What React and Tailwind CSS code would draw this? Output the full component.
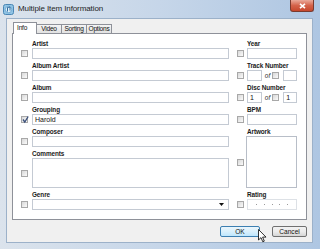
import React from 'react';

const Check = ({ checked }) => (
  <div className="relative w-[7px] h-[7px] shrink-0 border border-[#a8a8a8] bg-linear-to-br from-[#d8d8d8] to-[#fbfbfb]">
    {checked && (
      <svg className="absolute -left-[1px] -top-[2px]" width="9" height="9" viewBox="0 0 9 9">
        <path d="M2 4.5 L3.8 7 L7.2 1.5" fill="none" stroke="#3a4f7a" strokeWidth="1.3" />
      </svg>
    )}
  </div>
);

const Label = ({ children, className = '' }) => (
  <div className={`h-[8px] text-[6.4px] font-bold leading-[8px] tracking-[-0.1px] text-[#1a1a1a] ${className}`}>
    {children}
  </div>
);

const Box = ({ children, className = '' }) => (
  <div className={`h-[11px] border border-[#c4cad3] bg-white text-[7px] leading-[9px] pl-[2px] ${className}`}>
    {children}
  </div>
);

const LeftField = ({ label, checked, value, focused }) => (
  <div className="flex flex-col">
    <Label className="pl-[11px]">{label}</Label>
    <div className="flex items-center gap-[4px]">
      <Check checked={checked} />
      <Box className={`flex-1 ${focused ? 'border-[#9fc2e6]' : ''}`}>{value}</Box>
    </div>
  </div>
);

const RightField = ({ label }) => (
  <div className="flex flex-col">
    <Label className="pl-[10px]">{label}</Label>
    <div className="flex items-center gap-[3px]">
      <Check />
      <Box className="flex-1" />
    </div>
  </div>
);

const NumberField = ({ label, a, b }) => (
  <div className="flex flex-col">
    <Label className="pl-[10px]">{label}</Label>
    <div className="flex items-center">
      <Check />
      <Box className="ml-[3px] w-[15px] pl-[2px]">{a}</Box>
      <span className="ml-[3px] text-[6.5px] italic text-[#333] leading-[8px]">of</span>
      <div className="ml-[2px]">
        <Check />
      </div>
      <Box className="ml-[4px] w-[14px] pl-[2px]">{b}</Box>
    </div>
  </div>
);

const Tab = ({ children, active }) =>
  active ? (
    <div className="relative z-10 h-[12px] w-[24px] border border-b-0 border-[#8e9199] bg-white pl-[3px] text-[6.6px] leading-[10px] tracking-[-0.2px]">
      {children}
    </div>
  ) : (
    <div className="-ml-[1px] h-[10px] w-[26px] border border-[#8e9199] bg-linear-to-b from-[#f4f4f4] to-[#e2e2e2] text-center text-[6.6px] leading-[8px] tracking-[-0.25px]">
      {children}
    </div>
  );

export default function App() {
  return (
    <div
      className="relative w-[320px] h-[249px] overflow-hidden bg-linear-to-r from-[#dbe3ec] via-[#c6d6e9] to-[#aec6e2] text-[#111]"
      style={{ fontFamily: '"Liberation Sans", Arial, sans-serif' }}
    >
      {/* title bar */}
      <div className="flex h-[18px] items-center pl-[3px]">
        <svg width="11" height="11" viewBox="0 0 11 11">
          <rect x="0.5" y="0.5" width="10" height="10" rx="2" fill="#8fc3e4" stroke="#4a86b5" />
          <circle cx="5.5" cy="5.5" r="3.2" fill="#dff1fb" stroke="#5b9ccc" strokeWidth="0.8" />
          <path d="M4.5 7.5 V3.5 L7 3 V6.6" fill="none" stroke="#1f5f95" strokeWidth="0.9" />
        </svg>
        <span className="ml-[4px] text-[8px] leading-[10px] tracking-[-0.1px] text-[#1e1e1e]">Multiple Item Information</span>
        <div className="ml-auto mr-[6px] flex h-[12px] w-[24px] self-start items-center justify-center rounded-b-[3px] border border-t-0 border-[#7a3a2e] bg-linear-to-b from-[#e9a99a] via-[#d4624a] to-[#c6472c]">
          <svg width="7" height="6" viewBox="0 0 7 6">
            <path d="M1 0.8 L6 5.2 M6 0.8 L1 5.2" stroke="#fff" strokeWidth="1.6" />
          </svg>
        </div>
      </div>

      {/* client area */}
      <div className="ml-[6px] flex h-[225px] w-[307px] flex-col border border-[#9cb1c9] bg-[#f0f0f0] px-[5px] pt-[3px]">
        <div className="flex h-[12px] items-end pl-[1px]">
          <Tab active>Info</Tab>
          <Tab>Video</Tab>
          <Tab>Sorting</Tab>
          <Tab>Options</Tab>
        </div>
        <div className="-mt-[1px] flex h-[187px] w-[295px] gap-[8px] border border-[#8e9199] bg-white pl-[8px] pt-[6px]">
          <div className="flex w-[208px] flex-col gap-[3px]">
            <LeftField label="Artist" />
            <LeftField label="Album Artist" />
            <LeftField label="Album" />
            <LeftField label="Grouping" checked value="Harold" focused />
            <LeftField label="Composer" />
            <div className="flex flex-col">
              <Label className="pl-[11px]">Comments</Label>
              <div className="flex items-center gap-[4px]">
                <Check />
                <div className="h-[30px] flex-1 border border-[#c4cad3] bg-white" />
              </div>
            </div>
            <div className="flex flex-col">
              <Label className="pl-[11px]">Genre</Label>
              <div className="flex items-center gap-[4px]">
                <Check />
                <div className="flex h-[11px] flex-1 items-center justify-end border border-[#c4cad3] bg-white pr-[4px]">
                  <svg width="5" height="3" viewBox="0 0 5 3">
                    <path d="M0 0 H5 L2.5 3 Z" fill="#111" />
                  </svg>
                </div>
              </div>
            </div>
          </div>

          <div className="flex w-[60px] flex-col gap-[3px]">
            <RightField label="Year" />
            <NumberField label="Track Number" />
            <NumberField label="Disc Number" a="1" b="1" />
            <RightField label="BPM" />
            <div className="flex flex-col">
              <Label className="pl-[10px]">Artwork</Label>
              <div className="flex items-center gap-[2px]">
                <Check />
                <div className="h-[52px] flex-1 border border-[#b8bec8] bg-white" />
              </div>
            </div>
            <div className="flex flex-col">
              <Label className="pl-[10px]">Rating</Label>
              <div className="flex items-center gap-[3px]">
                <Check />
                <div className="flex h-[11px] flex-1 items-center justify-between border border-[#dde1e6] bg-white px-[8px]">
                  {[0, 1, 2, 3, 4].map((i) => (
                    <div key={i} className="h-[1px] w-[1px] bg-[#9a9a9a]" />
                  ))}
                </div>
              </div>
            </div>
          </div>
        </div>

        {/* buttons */}
        <div className="mt-[6px] flex justify-end gap-[12px]">
          <div className="flex h-[11px] w-[40px] items-center justify-center rounded-[2px] border border-[#3c7fb1] bg-linear-to-b from-[#eaf6fd] via-[#d9f0fc] to-[#bee6fd] text-[6.6px]">
            OK
          </div>
          <div className="flex h-[11px] w-[35px] items-center justify-center rounded-[2px] border border-[#707070] bg-linear-to-b from-[#f2f2f2] via-[#ebebeb] to-[#d6d6d6] text-[6.6px]">
            Cancel
          </div>
        </div>
      </div>

      {/* mouse cursor */}
      <svg className="absolute left-[258px] top-[229px]" width="9" height="14" viewBox="0 0 9 14">
        <path d="M0.5 0.5 V11 L3 8.6 L4.8 12.8 L6.3 12.1 L4.6 8.1 L8 8.1 Z" fill="#fff" stroke="#000" strokeWidth="0.8" strokeLinejoin="round" />
      </svg>
    </div>
  );
}
